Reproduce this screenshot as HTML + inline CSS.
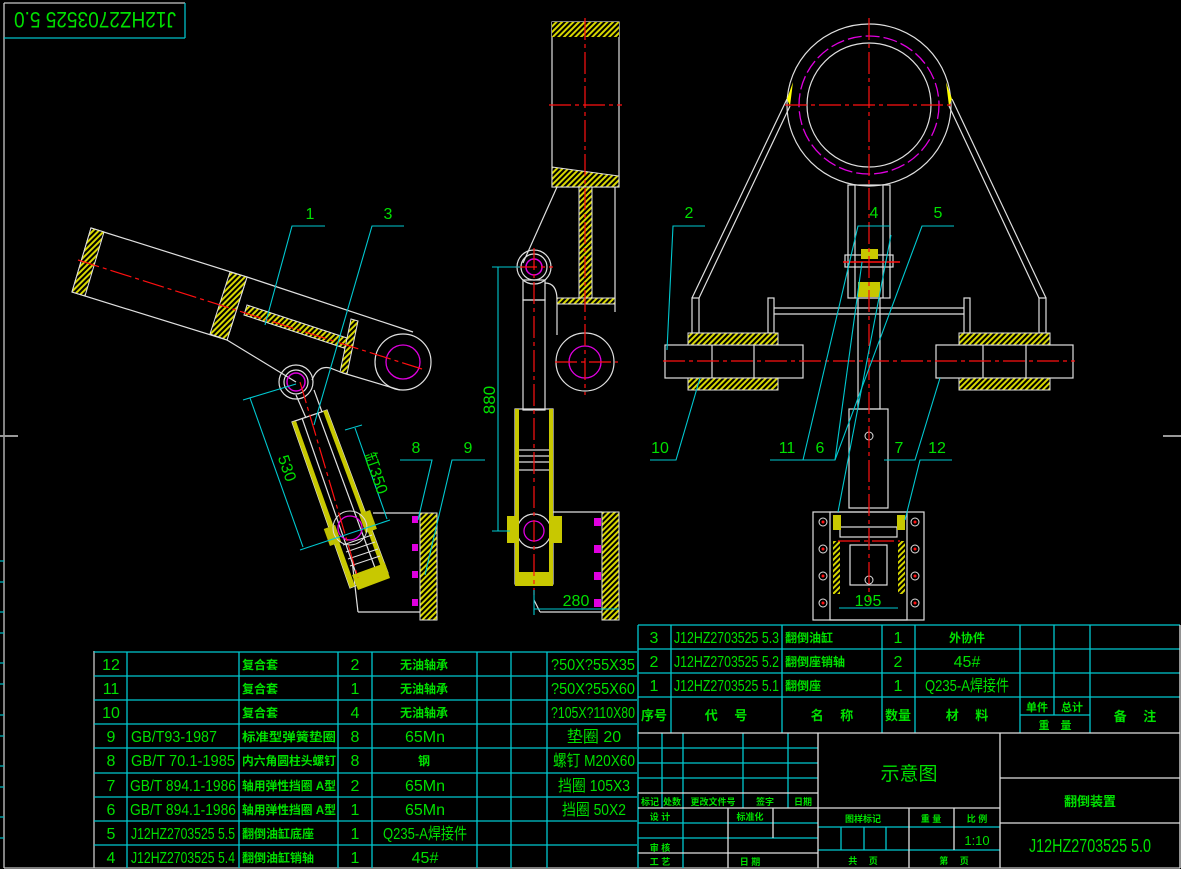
<!DOCTYPE html>
<html><head><meta charset="utf-8"><style>
html,body{margin:0;padding:0;background:#000;width:1181px;height:869px;overflow:hidden}
svg{display:block}
text{font-family:"Liberation Sans","Noto Sans CJK SC",sans-serif;fill:#00e000}
</style></head><body>
<svg width="1181" height="869" viewBox="0 0 1181 869" xmlns="http://www.w3.org/2000/svg">
<defs>
<pattern id="h" width="4" height="4" patternUnits="userSpaceOnUse" patternTransform="rotate(45)">
<rect width="4" height="4" fill="#000"/><rect width="2" height="4" fill="#d8d800"/></pattern>
</defs>
<g stroke="#c8c8c8" fill="none" stroke-width="1.3">
<line x1="4" y1="3" x2="4" y2="868"/><line x1="4" y1="868" x2="1180" y2="868"/>
<line x1="4" y1="3" x2="185" y2="3"/>
<line x1="0" y1="436" x2="18" y2="436" stroke="#999" stroke-width="2"/>
<line x1="1163" y1="436" x2="1181" y2="436" stroke="#999" stroke-width="2"/>
<line x1="94" y1="651" x2="94" y2="868"/>
</g>
<line x1="4" y1="38" x2="185" y2="38" stroke="#00c0c8" stroke-width="1.3"/>
<line x1="185" y1="3" x2="185" y2="38" stroke="#00c0c8" stroke-width="1.3"/>
<g transform="rotate(180 95 20)"><text x="95" y="28" font-size="22" text-anchor="middle" textLength="162" lengthAdjust="spacingAndGlyphs">J12HZ2703525 5.0</text></g>
<g stroke="#00c0c8" stroke-width="1.2">
<line x1="0" y1="561" x2="4" y2="561"/><line x1="0" y1="582" x2="4" y2="582"/><line x1="0" y1="612" x2="4" y2="612"/><line x1="0" y1="633" x2="4" y2="633"/><line x1="0" y1="663" x2="4" y2="663"/><line x1="0" y1="684" x2="4" y2="684"/><line x1="0" y1="715" x2="4" y2="715"/><line x1="0" y1="736" x2="4" y2="736"/><line x1="0" y1="766" x2="4" y2="766"/><line x1="0" y1="787" x2="4" y2="787"/><line x1="0" y1="817" x2="4" y2="817"/><line x1="0" y1="838" x2="4" y2="838"/>
</g>

<!-- ===== LEFT VIEW ===== -->
<g stroke="#e0e0e0" fill="none" stroke-width="1.2">
<polygon points="91,228 247,277 227,340 72,292"/>
<line x1="247" y1="277" x2="413" y2="332"/>
<line x1="227" y1="340" x2="296" y2="382"/>
<line x1="343" y1="373" x2="400" y2="390"/>
<circle cx="403" cy="362" r="28"/>
<circle cx="296" cy="382" r="17"/><circle cx="296" cy="382" r="12"/>
<path d="M312,380 Q318,365 330,368 L343,373"/>
<polygon points="292,422 327,410 388,573 350,588"/>
<line x1="302" y1="418" x2="360" y2="585"/><line x1="318" y1="413" x2="378" y2="576"/>
<line x1="296" y1="395" x2="306" y2="418"/><line x1="314" y1="390" x2="322" y2="412"/>
<polyline points="358,612 420,612"/>
<polyline points="373,513 420,513"/>
<line x1="352" y1="560" x2="358" y2="612"/>
</g>
<polygon points="91,228 104,232 85,296 72,292" fill="url(#h)" stroke="#e0e0e0"/>
<polygon points="230,272 247,277 227,340 210,334" fill="url(#h)" stroke="#e0e0e0"/>
<polygon points="247,305 353,340 350,350 244,315" fill="url(#h)" stroke="#e0e0e0"/>
<polygon points="351,319 358,321 347,374 340,372" fill="url(#h)" stroke="#e0e0e0"/>
<polygon points="292,422 296,421 355,586 350,588" fill="#c8c800"/>
<polygon points="323,411 327,410 388,573 384,575" fill="#c8c800"/>
<polygon points="352,575 385,563 390,578 358,590" fill="#c8c800"/>
<g transform="rotate(-20 350 528)"><rect x="325" y="520" width="12" height="18" fill="#c0c000"/><rect x="363" y="518" width="12" height="20" fill="#c0c000"/></g>
<circle cx="350" cy="528" r="12" stroke="#e000e0" fill="none" stroke-width="1.3"/>
<circle cx="350" cy="528" r="17" stroke="#e0e0e0" fill="none" stroke-width="1"/>
<circle cx="403" cy="362" r="17" stroke="#e000e0" fill="none" stroke-width="1.3"/>
<circle cx="296" cy="382" r="9" stroke="#e000e0" fill="none" stroke-width="1.5"/>
<g stroke="#e0e0e0" stroke-width="1"><line x1="343" y1="545" x2="372" y2="535"/><line x1="346" y1="552" x2="375" y2="542"/><line x1="348" y1="559" x2="378" y2="549"/><line x1="350" y1="566" x2="380" y2="556"/></g>
<rect x="420" y="513" width="17" height="107" fill="url(#h)" stroke="#e0e0e0"/>
<g fill="#e000e0"><rect x="412" y="516" width="6" height="7"/><rect x="412" y="544" width="6" height="7"/><rect x="412" y="571" width="6" height="7"/><rect x="412" y="599" width="6" height="7"/></g>
<g stroke="#ff1010" stroke-width="1.2" stroke-dasharray="22,4,4,4">
<line x1="78" y1="260" x2="422" y2="369"/>
<line x1="300" y1="382" x2="358" y2="578"/>
</g>
<g stroke="#00c8d0" stroke-width="1.1" fill="none">
<polyline points="325,226 292,226 265,325"/>
<polyline points="404,226 372,226 314,425"/>
<polyline points="400,460 432,460 418,520"/>
<polyline points="485,460 452,460 425,575"/>
<line x1="243" y1="400" x2="296" y2="384"/><line x1="300" y1="550" x2="390" y2="520"/>
<line x1="250" y1="398" x2="303" y2="547"/>
<line x1="345" y1="430" x2="362" y2="425"/><line x1="355" y1="428" x2="387" y2="519"/>
</g>
<text x="310" y="219" font-size="16" text-anchor="middle">1</text>
<text x="388" y="219" font-size="16" text-anchor="middle">3</text>
<text x="416" y="453" font-size="16" text-anchor="middle">8</text>
<text x="468" y="453" font-size="16" text-anchor="middle">9</text>
<text x="282" y="470" font-size="16" text-anchor="middle" transform="rotate(71 282 470)">530</text>
<text x="371" y="475" font-size="16" text-anchor="middle" transform="rotate(71 371 475)">缸350</text>

<!-- ===== MIDDLE VIEW ===== -->
<g stroke="#e0e0e0" fill="none" stroke-width="1.2">
<rect x="552" y="22" width="67" height="165"/>
<line x1="615" y1="187" x2="615" y2="312"/>
<line x1="557" y1="187" x2="523" y2="263"/>
<circle cx="585" cy="362" r="29"/>
<circle cx="534" cy="267" r="17"/><circle cx="534" cy="267" r="13"/>
<rect x="523" y="280" width="22" height="20"/>
<rect x="523" y="300" width="22" height="110"/>
<path d="M545,283 Q557,283 557,300 L557,335"/>
<rect x="515" y="409" width="38" height="175"/>
<rect x="518" y="450" width="32" height="20"/>
<line x1="518" y1="456" x2="550" y2="456"/><line x1="518" y1="462" x2="550" y2="462"/>
<line x1="553" y1="512" x2="602" y2="512"/>
<line x1="534" y1="600" x2="540" y2="612"/><line x1="540" y1="612" x2="619" y2="612"/>
<circle cx="534" cy="531" r="17"/>
</g>
<rect x="552" y="22" width="67" height="15" fill="url(#h)"/>
<path d="M552,167 L619,176 L619,187 L552,187Z" fill="url(#h)" stroke="#e0e0e0"/>
<rect x="579" y="187" width="13" height="111" fill="url(#h)" stroke="#e0e0e0"/>
<rect x="557" y="298" width="58" height="6" fill="url(#h)" stroke="#e0e0e0"/>
<rect x="515" y="409" width="4" height="165" fill="#c8c800"/><rect x="549" y="409" width="4" height="165" fill="#c8c800"/>
<rect x="507" y="516" width="10" height="27" fill="#c8c800"/><rect x="552" y="516" width="10" height="27" fill="#c8c800"/>
<rect x="515" y="572" width="38" height="14" fill="#c8c800"/>
<circle cx="534" cy="531" r="10" stroke="#e000e0" fill="none" stroke-width="1.3"/>
<circle cx="585" cy="362" r="16" stroke="#e000e0" fill="none" stroke-width="1.3"/>
<circle cx="534" cy="267" r="8" stroke="#e000e0" fill="none" stroke-width="1.5"/>
<rect x="602" y="512" width="17" height="108" fill="url(#h)" stroke="#e0e0e0"/>
<g fill="#e000e0"><rect x="594" y="518" width="7" height="8"/><rect x="594" y="545" width="7" height="8"/><rect x="594" y="572" width="7" height="8"/><rect x="594" y="599" width="7" height="8"/></g>
<g stroke="#ff1010" stroke-width="1.2" stroke-dasharray="22,4,4,4">
<line x1="585" y1="18" x2="585" y2="395"/>
<line x1="549" y1="105" x2="622" y2="105"/>
<line x1="534" y1="248" x2="534" y2="595"/>
<line x1="555" y1="362" x2="618" y2="362"/>
<line x1="515" y1="267" x2="553" y2="267"/>
</g>
<g stroke="#00c8d0" stroke-width="1.1" fill="none">
<line x1="492" y1="267" x2="520" y2="267"/><line x1="492" y1="531" x2="510" y2="531"/>
<line x1="498" y1="267" x2="498" y2="531"/>
<line x1="534" y1="609" x2="619" y2="609"/><line x1="534" y1="590" x2="534" y2="615"/>
</g>
<text x="0" y="0" font-size="17" transform="translate(495,400) rotate(-90)" text-anchor="middle">880</text>
<text x="576" y="606" font-size="16" text-anchor="middle">280</text>

<!-- ===== RIGHT VIEW ===== -->
<g stroke="#e0e0e0" fill="none" stroke-width="1.2">
<ellipse cx="869" cy="105" rx="82" ry="81"/>
<ellipse cx="869" cy="105" rx="62" ry="62"/>
<line x1="787" y1="99" x2="692" y2="298"/><line x1="790" y1="106" x2="699" y2="298"/>
<line x1="952" y1="99" x2="1046" y2="298"/><line x1="949" y1="106" x2="1039" y2="298"/>
<rect x="692" y="298" width="7" height="35"/><rect x="1039" y="298" width="7" height="35"/>
<rect x="768" y="298" width="6" height="35"/><rect x="964" y="298" width="6" height="35"/>
<line x1="774" y1="308" x2="964" y2="308"/><line x1="774" y1="314" x2="964" y2="314"/>
<rect x="848" y="185" width="42" height="113"/>
<line x1="855" y1="185" x2="855" y2="298"/><line x1="883" y1="185" x2="883" y2="298"/>
<rect x="845" y="255" width="48" height="12"/>
<rect x="858" y="298" width="22" height="111"/>
<rect x="849" y="409" width="39" height="99"/>
<rect x="665" y="345" width="138" height="33"/>
<rect x="936" y="345" width="137" height="33"/>
<line x1="712" y1="345" x2="712" y2="378"/><line x1="754" y1="345" x2="754" y2="378"/>
<line x1="983" y1="345" x2="983" y2="378"/><line x1="1026" y1="345" x2="1026" y2="378"/>
<rect x="813" y="512" width="111" height="108"/>
<rect x="830" y="512" width="77" height="108"/>
<rect x="840" y="527" width="57" height="10"/>
<rect x="850" y="545" width="37" height="40"/>
</g>
<ellipse cx="869" cy="105" rx="70" ry="69" stroke="#e000e0" fill="none" stroke-width="1.3" stroke-dasharray="14,4"/>
<rect x="688" y="333" width="90" height="12" fill="url(#h)" stroke="#e0e0e0"/>
<rect x="688" y="378" width="90" height="12" fill="url(#h)" stroke="#e0e0e0"/>
<rect x="959" y="333" width="91" height="12" fill="url(#h)" stroke="#e0e0e0"/>
<rect x="959" y="378" width="91" height="12" fill="url(#h)" stroke="#e0e0e0"/>
<rect x="861" y="249" width="17" height="10" fill="#c8c800"/>
<rect x="858" y="282" width="22" height="15" fill="#c8c800"/>
<rect x="833" y="541" width="7" height="53" fill="url(#h)"/><rect x="898" y="541" width="7" height="53" fill="url(#h)"/>
<rect x="833" y="515" width="8" height="15" fill="#c8c800"/><rect x="897" y="515" width="8" height="15" fill="#c8c800"/>
<polygon points="787,99 793,82 790,106" fill="#ffff00"/><polygon points="952,99 946,82 949,106" fill="#ffff00"/>
<g fill="none" stroke="#e0e0e0" stroke-width="1"><circle cx="823" cy="522" r="4"/><circle cx="823" cy="549" r="4"/><circle cx="823" cy="576" r="4"/><circle cx="823" cy="603" r="4"/><circle cx="915" cy="522" r="4"/><circle cx="915" cy="549" r="4"/><circle cx="915" cy="576" r="4"/><circle cx="915" cy="603" r="4"/><circle cx="869" cy="436" r="4"/><circle cx="869" cy="580" r="4"/></g>
<g fill="#ff1010"><circle cx="823" cy="522" r="1.5"/><circle cx="823" cy="549" r="1.5"/><circle cx="823" cy="576" r="1.5"/><circle cx="823" cy="603" r="1.5"/><circle cx="915" cy="522" r="1.5"/><circle cx="915" cy="549" r="1.5"/><circle cx="915" cy="576" r="1.5"/><circle cx="915" cy="603" r="1.5"/></g>
<g stroke="#ff1010" stroke-width="1.2" stroke-dasharray="22,4,4,4">
<line x1="869" y1="18" x2="869" y2="600"/>
<line x1="785" y1="105" x2="953" y2="105"/>
<line x1="663" y1="361" x2="1075" y2="361"/>
<line x1="838" y1="541" x2="900" y2="541"/>
</g>
<line x1="843" y1="262" x2="900" y2="262" stroke="#ff1010" stroke-width="1.5"/>
<g stroke="#00c8d0" stroke-width="1.1" fill="none">
<polyline points="705,226 673,226 667,350"/>
<polyline points="890,226 858,226 803,460 770,460"/>
<polyline points="954,226 922,226 835,460 803,460"/>
<polyline points="862,262 835,460"/>
<polyline points="891,235 838,512"/>
<polyline points="650,460 676,460 700,378"/>
<polyline points="884,460 915,460 940,378"/>
<polyline points="952,460 920,460 905,520"/>
<line x1="839" y1="608" x2="898" y2="608"/>
</g>
<text x="689" y="218" font-size="16" text-anchor="middle">2</text>
<text x="874" y="218" font-size="16" text-anchor="middle">4</text>
<text x="938" y="218" font-size="16" text-anchor="middle">5</text>
<text x="660" y="453" font-size="16" text-anchor="middle">10</text>
<text x="787" y="453" font-size="16" text-anchor="middle">11</text>
<text x="820" y="453" font-size="16" text-anchor="middle">6</text>
<text x="899" y="453" font-size="16" text-anchor="middle">7</text>
<text x="937" y="453" font-size="16" text-anchor="middle">12</text>
<text x="868" y="606" font-size="16" text-anchor="middle">195</text>

<!-- ===== LEFT PARTS TABLE ===== -->
<g stroke="#00c8d0" stroke-width="1.3">
<line x1="94" y1="652" x2="637" y2="652"/><line x1="94" y1="676" x2="637" y2="676"/><line x1="94" y1="700" x2="637" y2="700"/><line x1="94" y1="724" x2="637" y2="724"/><line x1="94" y1="748" x2="637" y2="748"/><line x1="94" y1="773" x2="637" y2="773"/><line x1="94" y1="797" x2="637" y2="797"/><line x1="94" y1="821" x2="637" y2="821"/><line x1="94" y1="845" x2="637" y2="845"/>
<line x1="127" y1="652" x2="127" y2="868"/><line x1="239" y1="652" x2="239" y2="868"/><line x1="338" y1="652" x2="338" y2="868"/><line x1="372" y1="652" x2="372" y2="868"/><line x1="477" y1="652" x2="477" y2="868"/><line x1="511" y1="652" x2="511" y2="868"/><line x1="547" y1="652" x2="547" y2="868"/>
</g>
<g font-size="16" text-anchor="middle">
<text x="111" y="670">12</text><text x="111" y="694">11</text><text x="111" y="718">10</text><text x="111" y="742">9</text><text x="111" y="766">8</text><text x="111" y="791">7</text><text x="111" y="815">6</text><text x="111" y="839">5</text><text x="111" y="863">4</text>
<text x="355" y="670">2</text><text x="355" y="694">1</text><text x="355" y="718">4</text><text x="355" y="742">8</text><text x="355" y="766">8</text><text x="355" y="791">2</text><text x="355" y="815">1</text><text x="355" y="839">1</text><text x="355" y="863">1</text>
<text x="425" y="742">65Mn</text><text x="425" y="791">65Mn</text><text x="425" y="815">65Mn</text><text x="425" y="863">45#</text>
</g>
<g font-size="16" lengthAdjust="spacingAndGlyphs">
<text x="131" y="742" textLength="86" lengthAdjust="spacingAndGlyphs">GB/T93-1987</text><text x="131" y="766" textLength="104" lengthAdjust="spacingAndGlyphs">GB/T 70.1-1985</text><text x="130" y="791" textLength="106" lengthAdjust="spacingAndGlyphs">GB/T 894.1-1986</text><text x="130" y="815" textLength="106" lengthAdjust="spacingAndGlyphs">GB/T 894.1-1986</text><text x="131" y="839" textLength="104" lengthAdjust="spacingAndGlyphs">J12HZ2703525 5.5</text><text x="131" y="863" textLength="104" lengthAdjust="spacingAndGlyphs">J12HZ2703525 5.4</text>
</g>
<g font-size="12" font-weight="bold">
<text x="242" y="669">复合套</text><text x="242" y="693">复合套</text><text x="242" y="717">复合套</text>
<text x="242" y="741" textLength="94" lengthAdjust="spacingAndGlyphs">标准型弹簧垫圈</text><text x="242" y="765" textLength="94" lengthAdjust="spacingAndGlyphs">内六角圆柱头螺钉</text><text x="242" y="790" textLength="94" lengthAdjust="spacingAndGlyphs">轴用弹性挡圈 A型</text><text x="242" y="814" textLength="94" lengthAdjust="spacingAndGlyphs">轴用弹性挡圈 A型</text><text x="242" y="838">翻倒油缸底座</text><text x="242" y="862">翻倒油缸销轴</text>
<text x="424" y="669" text-anchor="middle">无油轴承</text><text x="424" y="693" text-anchor="middle">无油轴承</text><text x="424" y="717" text-anchor="middle">无油轴承</text><text x="424" y="765" text-anchor="middle">钢</text>
</g>
<g font-size="16" text-anchor="middle">
<text x="593" y="670" textLength="84" lengthAdjust="spacingAndGlyphs">?50X?55X35</text><text x="593" y="694" textLength="84" lengthAdjust="spacingAndGlyphs">?50X?55X60</text><text x="593" y="718" textLength="84" lengthAdjust="spacingAndGlyphs">?105X?110X80</text>
<text x="594" y="742">垫圈 20</text><text x="594" y="766" textLength="82" lengthAdjust="spacingAndGlyphs">螺钉 M20X60</text><text x="594" y="791" textLength="72" lengthAdjust="spacingAndGlyphs">挡圈 105X3</text><text x="594" y="815" textLength="64" lengthAdjust="spacingAndGlyphs">挡圈 50X2</text>
<text x="425" y="839" textLength="84" lengthAdjust="spacingAndGlyphs">Q235-A焊接件</text>
</g>

<!-- ===== RIGHT TABLE ===== -->
<g stroke="#00c8d0" stroke-width="1.3" fill="none">
<line x1="638" y1="625" x2="1180" y2="625"/><line x1="638" y1="649" x2="1180" y2="649"/><line x1="638" y1="673" x2="1180" y2="673"/><line x1="638" y1="697" x2="1180" y2="697"/>
<line x1="1020" y1="715" x2="1090" y2="715"/>
<line x1="638" y1="625" x2="638" y2="868"/><line x1="671" y1="625" x2="671" y2="733"/><line x1="782" y1="625" x2="782" y2="733"/><line x1="882" y1="625" x2="882" y2="733"/><line x1="915" y1="625" x2="915" y2="733"/><line x1="1020" y1="625" x2="1020" y2="733"/><line x1="1054" y1="625" x2="1054" y2="715"/><line x1="1090" y1="625" x2="1090" y2="733"/>
<line x1="638" y1="748" x2="818" y2="748"/><line x1="638" y1="763" x2="818" y2="763"/><line x1="638" y1="778" x2="818" y2="778"/><line x1="638" y1="823" x2="818" y2="823"/><line x1="638" y1="838" x2="818" y2="838"/>
<line x1="818" y1="827" x2="1000" y2="827"/><line x1="818" y1="850" x2="1000" y2="850"/>
<line x1="662" y1="733" x2="662" y2="808"/><line x1="683" y1="733" x2="683" y2="868"/><line x1="743" y1="733" x2="743" y2="808"/><line x1="788" y1="733" x2="788" y2="808"/>
<line x1="841" y1="827" x2="841" y2="850"/><line x1="864" y1="827" x2="864" y2="850"/><line x1="886" y1="827" x2="886" y2="850"/>
</g>
<g stroke="#e0e0e0" stroke-width="1.3" fill="none">
<line x1="638" y1="733" x2="1180" y2="733"/>
<line x1="638" y1="793" x2="818" y2="793"/><line x1="638" y1="808" x2="818" y2="808"/>
<line x1="638" y1="853" x2="818" y2="853"/>
<line x1="818" y1="733" x2="818" y2="868"/><line x1="1000" y1="733" x2="1000" y2="868"/>
<line x1="818" y1="808" x2="1000" y2="808"/>
<line x1="909" y1="808" x2="909" y2="868"/><line x1="954" y1="808" x2="954" y2="850"/>
<line x1="728" y1="808" x2="728" y2="868"/><line x1="773" y1="808" x2="773" y2="838"/>
<line x1="1000" y1="778" x2="1180" y2="778"/><line x1="1000" y1="823" x2="1180" y2="823"/>
<line x1="1180" y1="625" x2="1180" y2="868"/>
</g>
<g font-size="16" text-anchor="middle">
<text x="654" y="643">3</text><text x="654" y="667">2</text><text x="654" y="691">1</text>
<text x="898" y="643">1</text><text x="898" y="667">2</text><text x="898" y="691">1</text>
<text x="967" y="667">45#</text><text x="967" y="691" textLength="84" lengthAdjust="spacingAndGlyphs">Q235-A焊接件</text>
</g>
<g font-size="16"><text x="674" y="643" textLength="105" lengthAdjust="spacingAndGlyphs">J12HZ2703525 5.3</text><text x="674" y="667" textLength="105" lengthAdjust="spacingAndGlyphs">J12HZ2703525 5.2</text><text x="674" y="691" textLength="105" lengthAdjust="spacingAndGlyphs">J12HZ2703525 5.1</text></g>
<g font-size="12" font-weight="bold">
<text x="785" y="642">翻倒油缸</text><text x="785" y="666">翻倒座销轴</text><text x="785" y="690">翻倒座</text>
<text x="967" y="642" text-anchor="middle">外协件</text>
<text x="654" y="720" text-anchor="middle" font-size="13">序号</text>
<text x="726" y="720" text-anchor="middle" font-size="13">代　 号</text>
<text x="832" y="720" text-anchor="middle" font-size="13">名　 称</text>
<text x="898" y="720" text-anchor="middle" font-size="13">数量</text>
<text x="967" y="720" text-anchor="middle" font-size="13">材　 料</text>
<text x="1037" y="711" text-anchor="middle" font-size="11">单件</text><text x="1072" y="711" text-anchor="middle" font-size="11">总计</text>
<text x="1055" y="729" text-anchor="middle" font-size="11">重　量</text>
<text x="1135" y="721" text-anchor="middle" font-size="13">备　 注</text>
<g font-size="9"><text x="650" y="805" text-anchor="middle">标记</text><text x="672" y="805" text-anchor="middle">处数</text><text x="713" y="805" text-anchor="middle">更改文件号</text><text x="765" y="805" text-anchor="middle">签字</text><text x="803" y="805" text-anchor="middle">日期</text>
<text x="660" y="820" text-anchor="middle">设 计</text><text x="750" y="820" text-anchor="middle">标准化</text>
<text x="660" y="851" text-anchor="middle">审 核</text><text x="660" y="865" text-anchor="middle">工 艺</text><text x="750" y="865" text-anchor="middle">日 期</text>
<text x="863" y="822" text-anchor="middle">图样标记</text><text x="931" y="822" text-anchor="middle">重 量</text><text x="977" y="822" text-anchor="middle">比 例</text>
<text x="863" y="864" text-anchor="middle">共　 页</text><text x="954" y="864" text-anchor="middle">第　 页</text></g>
<text x="1090" y="806" text-anchor="middle" font-size="13">翻倒装置</text>
</g>
<text x="909" y="780" text-anchor="middle" font-size="19">示意图</text>
<text x="977" y="845" text-anchor="middle" font-size="13">1:10</text>
<text x="1090" y="852" text-anchor="middle" font-size="18" textLength="122" lengthAdjust="spacingAndGlyphs">J12HZ2703525 5.0</text>
</svg>
</body></html>
